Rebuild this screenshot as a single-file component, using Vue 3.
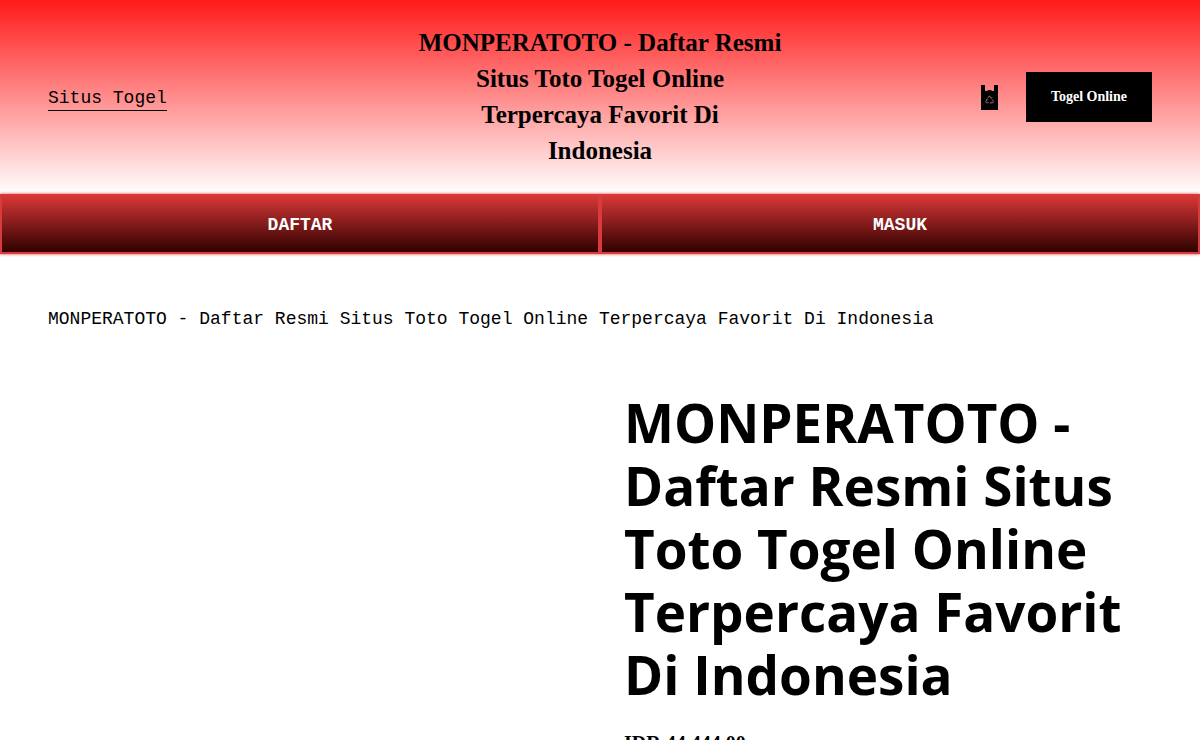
<script setup>
const titleLines = [
  'MONPERATOTO - Daftar Resmi',
  'Situs Toto Togel Online',
  'Terpercaya Favorit Di',
  'Indonesia'
]
const title = titleLines.join(' ')
const brand = titleLines.join('\n')
const actions = ['DAFTAR', 'MASUK']
</script>

<template>
  <div class="page">
    <header class="header">
      <nav class="left"><a class="nav-link" href="#">Situs Togel</a></nav>
      <a class="site-title" href="#">{{ brand }}</a>
      <div class="right">
        <a class="cart" href="#" aria-label="Cart">
          <svg width="17" height="25" viewBox="0 0 17 25" aria-hidden="true">
            <path d="M0 0h4v6h1.5q3-1.8 6 0H13V0h4v25H0z" fill="#000" />
            <g fill="none" stroke="#e08c8c" stroke-width=".7">
              <path d="M6.8 13.4l1.2-2.2h1l1.3 2M11.2 14.4l1.2 2.2-.6 1.2H9.4M7.6 17.8H5.5l-.6-1.2 1.2-2.2" />
              <path d="M9.2 13.3h1.5v-1.4M10.2 16.8l-1 1 1 1M5 14.7l1.3-.4.4 1.3" stroke-width=".4" />
            </g>
          </svg>
        </a>
        <a class="cta" href="#">Togel Online</a>
      </div>
    </header>
    <nav class="actions">
      <a v-for="label in actions" :key="label" class="action" href="#">{{ label }}</a>
    </nav>
    <main class="content">
      <nav aria-label="Breadcrumb"><a class="crumb" href="#">{{ title }}</a></nav>
      <section class="product">
        <div class="gallery"></div>
        <div class="details">
          <h1>{{ title }}</h1>
          <p class="price">IDR 44,444.00</p>
        </div>
      </section>
    </main>
  </div>
</template>

<style>
body { margin: 0; background: #fff; overflow: hidden; }
</style>

<style scoped>
.page {
  color: #000;
  font-family: "Liberation Mono", monospace;
  font-size: 18px;
  line-height: 30px;
}
a { color: inherit; text-decoration: none; }
.header {
  display: grid;
  grid-template-columns: 1fr auto 1fr;
  align-items: center;
  padding: 25px 48px;
  background: linear-gradient(#ff1a1a, #fff);
}
.nav-link {
  display: inline-block;
  padding-top: 5px;
  line-height: 24px;
  border-bottom: 1px solid #000;
}
.site-title {
  text-align: center;
  white-space: pre-line;
  font: bold 25px/36px "Liberation Serif", serif;
}
.right {
  display: flex;
  justify-content: flex-end;
  align-items: center;
  gap: 28px;
}
.cart { display: flex; }
.cta {
  padding: 0 25px;
  background: #000;
  color: #fff;
  font: bold 14px/50px "Liberation Serif", serif;
  white-space: nowrap;
}
.actions {
  display: grid;
  grid-template-columns: 1fr 1fr;
  box-shadow: 0 0 3px #e03a3a;
}
.action {
  border: 2px solid #d93a3c;
  border-top-width: 0;
  padding: 16px 0 12px;
  background: linear-gradient(#dc3938, #300000);
  color: #fff;
  font-weight: bold;
  text-align: center;
}
.content { padding: 50px 48px 0; }
.product {
  display: grid;
  grid-template-columns: 1fr 1fr;
  gap: 48px;
  padding-top: 57px;
}
h1 {
  margin: 0;
  font: bold 53px/63px "Open Sans", sans-serif;
}
.price {
  margin: 22px 0 0;
  font: bold 20px/30px "Liberation Serif", serif;
}
</style>
